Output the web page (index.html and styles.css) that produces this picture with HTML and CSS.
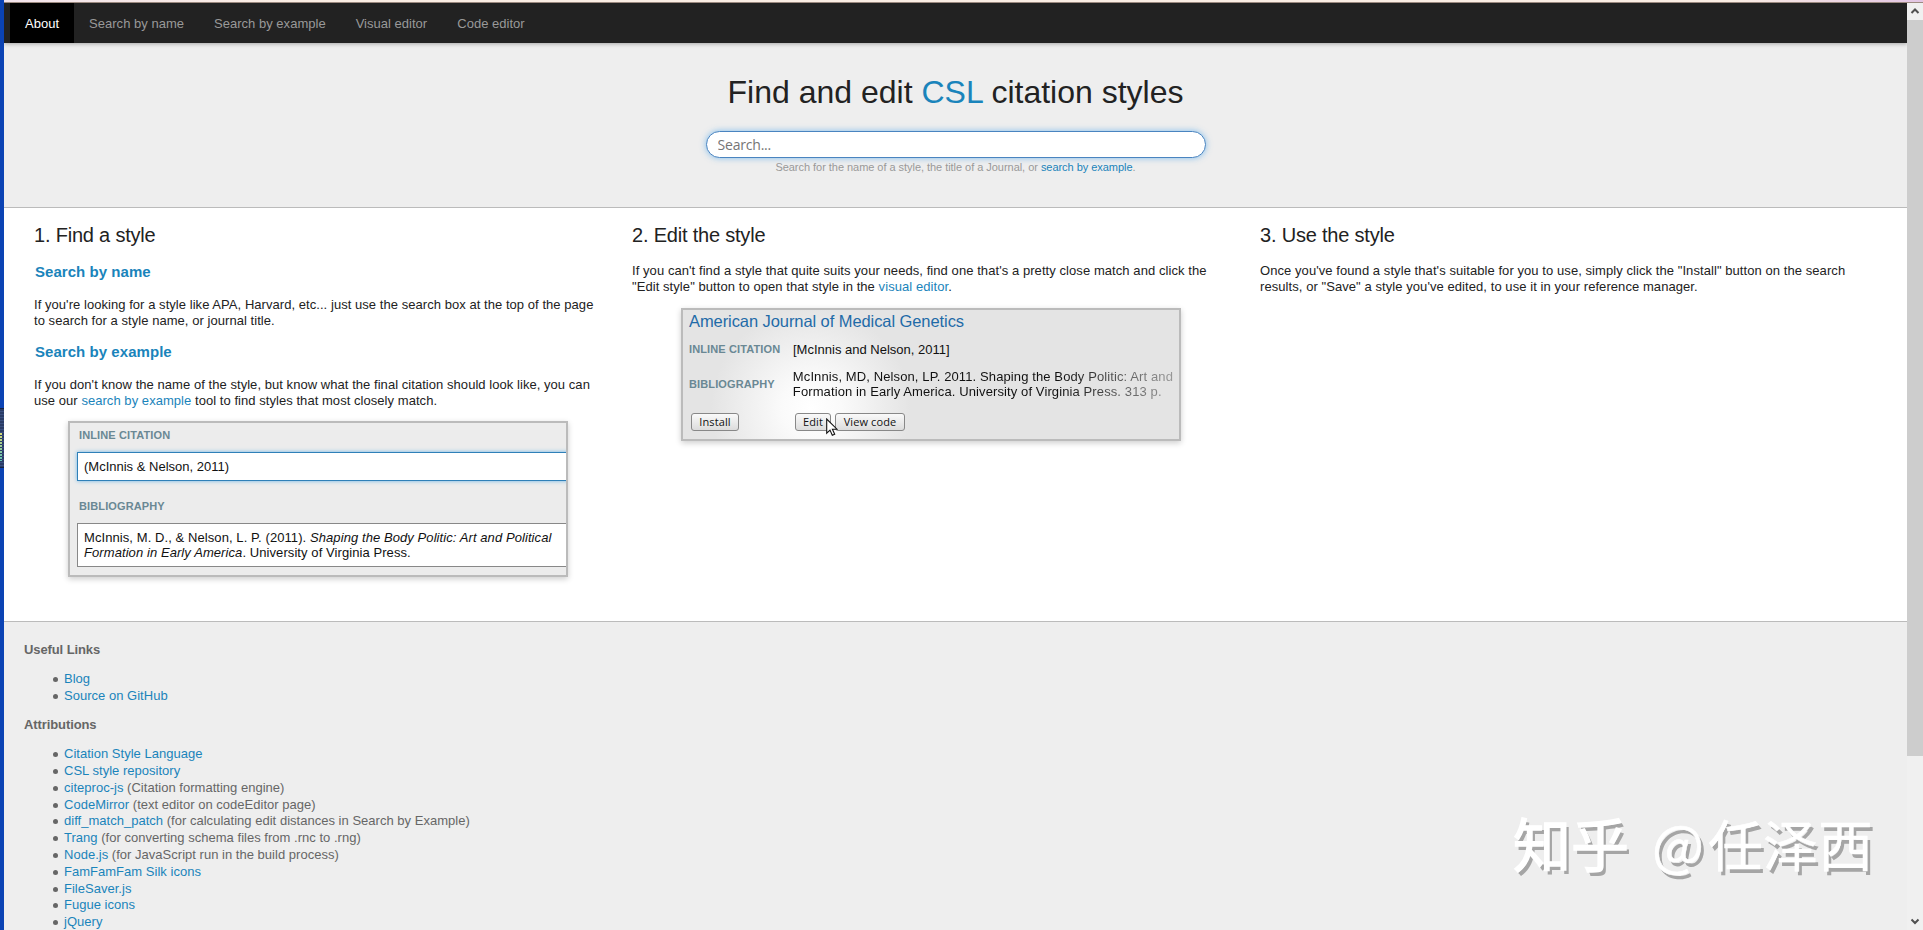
FILE: index.html
```html
<!DOCTYPE html>
<html lang="en">
<head>
    <meta charset="UTF-8">
    <title>Find and edit CSL citation styles</title>
    <link rel="stylesheet" href="styles.css">
</head>
<body>
    <div class="desktop-edge"><div class="edge-widget"></div></div>
    <div class="window">
        <div class="window-top"></div>
        <div class="window-body">
            <div class="page">
                <ul class="navbar">
                    <li class="active"><a href="#">About</a></li>
                    <li><a href="#">Search by name</a></li>
                    <li><a href="#">Search by example</a></li>
                    <li><a href="#">Visual editor</a></li>
                    <li><a href="#">Code editor</a></li>
                </ul>

                <div class="header">
                    <h1>Find and edit <a href="#">CSL</a> citation styles</h1>
                    <input type="text" class="search" placeholder="Search...">
                    <div class="hint">Search for the name of a style, the title of a Journal, or <a href="#">search by example</a>.</div>
                </div>

                <div class="columns">
                    <div class="column find">
                        <h2>1. Find a style</h2>
                        <h3><a href="#">Search by name</a></h3>
                        <p>If you're looking for a style like APA, Harvard, etc... just use the search box at the top of the page<br>to search for a style name, or journal title.</p>
                        <h3><a href="#">Search by example</a></h3>
                        <p>If you don't know the name of the style, but know what the final citation should look like, you can<br>use our <a href="#">search by example</a> tool to find styles that most closely match.</p>
                        <div class="shot example-shot">
                            <div class="label">INLINE CITATION</div>
                            <div class="field focused">(McInnis &amp; Nelson, 2011)</div>
                            <div class="label">BIBLIOGRAPHY</div>
                            <div class="field reference">McInnis, M. D., &amp; Nelson, L. P. (2011). <i>Shaping the Body Politic: Art and Political<br>Formation in Early America</i>. University of Virginia Press.</div>
                        </div>
                    </div>
                    <div class="column edit">
                        <h2>2. Edit the style</h2>
                        <p>If you can't find a style that quite suits your needs, find one that's a pretty close match and click the<br>"Edit style" button to open that style in the <a href="#">visual editor</a>.</p>
                        <div class="shot result-shot">
                            <div class="result-title">American Journal of Medical Genetics</div>
                            <div class="row inline-row">
                                <div class="label">INLINE CITATION</div>
                                <div class="citation">[McInnis and Nelson, 2011]</div>
                            </div>
                            <div class="row biblio-row">
                                <div class="label">BIBLIOGRAPHY</div>
                                <div class="citation fade">McInnis, MD, Nelson, LP. 2011. Shaping the Body Politic: Art and<br>Formation in Early America. University of Virginia Press. 313 p.</div>
                            </div>
                            <div class="buttons">
                                <span class="btn install">Install</span>
                                <span class="btn edit-btn">Edit</span>
                                <span class="btn code-btn">View code</span>
                            </div>
                            <svg class="cursor" width="12" height="19" viewBox="0 0 12 19"><path d="M.7 1v14.2l3.3-3.1 2.3 5.2 2.4-1-2.3-5.1h4.6z" fill="#fff" stroke="#111" stroke-width="1.1"/></svg>
                        </div>
                    </div>
                    <div class="column use">
                        <h2>3. Use the style</h2>
                        <p>Once you've found a style that's suitable for you to use, simply click the "Install" button on the search<br>results, or "Save" a style you've edited, to use it in your reference manager.</p>
                    </div>
                </div>

                <div class="footer">
                    <h4>Useful Links</h4>
                    <ul>
                        <li><a href="#">Blog</a></li>
                        <li><a href="#">Source on GitHub</a></li>
                    </ul>
                    <h4>Attributions</h4>
                    <ul>
                        <li><a href="#">Citation Style Language</a></li>
                        <li><a href="#">CSL style repository</a></li>
                        <li><a href="#">citeproc-js</a> (Citation formatting engine)</li>
                        <li><a href="#">CodeMirror</a> (text editor on codeEditor page)</li>
                        <li><a href="#">diff_match_patch</a> (for calculating edit distances in Search by Example)</li>
                        <li><a href="#">Trang</a> (for converting schema files from .rnc to .rng)</li>
                        <li><a href="#">Node.js</a> (for JavaScript run in the build process)</li>
                        <li><a href="#">FamFamFam Silk icons</a></li>
                        <li><a href="#">FileSaver.js</a></li>
                        <li><a href="#">Fugue icons</a></li>
                        <li><a href="#">jQuery</a></li>
                    </ul>
                </div>
            </div>
            <div class="scrollbar">
                <svg class="arrow" width="16" height="17" viewBox="0 0 16 17"><path d="M4.5 10l3.5-3.5 3.5 3.5" fill="none" stroke="#505050" stroke-width="2"/></svg>
                <div class="thumb"></div>
                <svg class="arrow down" width="16" height="17" viewBox="0 0 16 17"><path d="M4.5 6.5l3.5 3.5 3.5-3.5" fill="none" stroke="#505050" stroke-width="2"/></svg>
            </div>
        </div>
    </div>
    <div class="watermark"><span class="brand">知乎</span><span class="at">@</span><span class="author">任泽西</span></div>
</body>
</html>
```

FILE: styles.css
```css
* {
    box-sizing: border-box;
}

body {
    margin: 0;
    display: flex;
    height: 930px;
    overflow: hidden;
    font-family: "Liberation Sans", Arial, sans-serif;
    font-size: 13px;
    line-height: 16px;
    color: #222;
    background-color: #fff;
}

a {
    color: #1a84bb;
    text-decoration: none;
}

h1, h2, h3, h4, p, ul {
    margin: 0;
    padding: 0;
}

.desktop-edge {
    flex: none;
    width: 4px;
    padding-top: 408px;
    background-color: #0b43b4;
}

.edge-widget {
    height: 60px;
    padding-top: 24px;
    border-top: 1px solid #14213f;
    border-bottom: 1px solid #14213f;
    background: repeating-linear-gradient(#2a3c66 0 2px, #3a4f80 2px 3px);
}

.edge-widget::before {
    content: "";
    display: block;
    width: 2px;
    height: 28px;
    background: repeating-linear-gradient(transparent 0 2px, #2a3c66 2px 3px), linear-gradient(#d6dc7a, #5fc0b8);
}

.window {
    flex: 1;
    display: flex;
    flex-direction: column;
}

.window-top {
    flex: none;
    height: 3px;
    background: linear-gradient(to right, #f3e4ec, #fbeee4 15%, #fbeee4 90%, #e3c6e4);
    border-bottom: 1px solid #9c8a80;
}

.window-body {
    flex: 1;
    display: flex;
    min-height: 0;
}

.page {
    flex: 1;
    display: flex;
    flex-direction: column;
    overflow: hidden;
}

/* navigation */
.navbar {
    flex: none;
    display: flex;
    height: 40px;
    padding-left: 6px;
    list-style: none;
    background-color: #222;
    box-shadow: 0 1px 4px rgba(0, 0, 0, 0.3);
    position: relative;
}

.navbar li {
    padding: 13px 15px 0;
    letter-spacing: 0.02px;
}

.navbar a {
    color: #999;
}

.navbar .active {
    background-color: #000;
}

.navbar .active a {
    color: #fff;
}

/* search header */
.header {
    flex: none;
    height: 165px;
    display: flex;
    flex-direction: column;
    align-items: center;
    padding-top: 31px;
    background-color: #eee;
    border-bottom: 1px solid #bbb;
}

h1 {
    font-size: 32px;
    font-weight: normal;
    line-height: 36px;
}

.search {
    width: 500px;
    height: 27px;
    margin-top: 21px;
    padding: 0 11px;
    border: 1px solid #4a84c0;
    border-radius: 14px;
    outline: none;
    box-shadow: 0 0 6px rgba(82, 168, 236, 0.7);
    font-family: "Open Sans", sans-serif;
    font-size: 14px;
    letter-spacing: -0.2px;
}

.hint {
    margin-top: 1px;
    font-size: 11px;
    letter-spacing: -0.04px;
    color: #999;
}

/* three steps */
.columns {
    flex: none;
    display: flex;
    height: 413px;
    background-color: #fff;
}

.column {
    padding-top: 15px;
}

.find {
    width: 598px;
    padding-left: 30px;
}

.edit {
    width: 628px;
    padding-left: 30px;
}

.use {
    padding-left: 30px;
}

h2 {
    font-size: 20px;
    font-weight: normal;
    line-height: 24px;
    letter-spacing: -0.2px;
}

h3 {
    margin: 16px 0 0 1px;
    font-size: 15px;
    line-height: 18px;
    letter-spacing: 0.05px;
}

p + h3 {
    margin-top: 14px;
}

p {
    margin-top: 16px;
    letter-spacing: 0.07px;
    white-space: nowrap;
}

.find p {
    letter-spacing: 0.05px;
}

.shot {
    position: relative;
    width: 500px;
    border: 2px solid #bbb;
    box-shadow: 0 2px 6px rgba(0, 0, 0, 0.2);
    background-color: #ececec;
    overflow: hidden;
    color: #111;
    line-height: 15px;
    white-space: nowrap;
}

.label {
    font-size: 11px;
    font-weight: bold;
    letter-spacing: 0.12px;
    color: #6a8894;
}

.example-shot {
    height: 156px;
    margin: 12px 0 0 34px;
    padding: 5px 0 0 7px;
}

.example-shot .label {
    margin-left: 2px;
}

.field {
    margin: 9px -4px 18px 0;
    padding: 6px;
    border: 1px solid #888;
    background-color: #fff;
}

.field.focused {
    border-color: #2f80b8;
    box-shadow: 0 0 4px #6ab4e6;
}

.reference {
    letter-spacing: 0.08px;
}

.result-shot {
    height: 133px;
    margin: 13px 0 0 49px;
    padding: 1px 6px;
    background: radial-gradient(circle at 128px 98px, #fff 0, #fafafa 30px, #e4e4e4 100px);
}

.result-title {
    font-size: 16.5px;
    line-height: 20px;
    letter-spacing: -0.08px;
    color: #1f6ba8;
}

.row {
    display: flex;
    align-items: center;
}

.row .label {
    width: 104px;
}

.inline-row {
    margin-top: 11px;
}

.biblio-row {
    margin-top: 12px;
}

.fade {
    letter-spacing: 0.11px;
    color: transparent;
    background: linear-gradient(to right, #111 70%, #999 100%);
    background-clip: text;
}

.buttons {
    display: flex;
    margin: 14px 0 0 2px;
}

.btn {
    height: 18px;
    border: 1px solid #888;
    border-radius: 3px;
    background: linear-gradient(#fafafa, #dcdcdc);
    font-family: "Open Sans", sans-serif;
    font-size: 11px;
    line-height: 16px;
    letter-spacing: 0.1px;
    text-align: center;
}

.install {
    width: 48px;
    margin-right: 56px;
}

.edit-btn {
    width: 36px;
    margin-right: 4px;
}

.code-btn {
    width: 70px;
}

.cursor {
    position: absolute;
    left: 143px;
    top: 108px;
}

/* footer */
.footer {
    flex: none;
    padding: 20px 20px 0;
    border-top: 1px solid #bbb;
    background-color: #eee;
    color: #666;
    line-height: 16.8px;
}

.footer h4 {
    letter-spacing: -0.1px;
}

.footer ul {
    margin: 12px 0 13px;
    padding-left: 40px;
    list-style: none;
    letter-spacing: 0.02px;
}

.footer li::before {
    content: "";
    display: inline-block;
    width: 5px;
    height: 5px;
    margin: 0 6px 0 -11px;
    border-radius: 50%;
    background-color: #666;
    vertical-align: 1px;
}

/* scrollbar */
.scrollbar {
    flex: none;
    width: 16px;
    display: flex;
    flex-direction: column;
    background-color: #f0f0f0;
}

.arrow {
    flex: none;
    display: block;
}

.down {
    margin-top: auto;
}

.thumb {
    height: 736px;
    background-color: #cdcdcd;
}

.watermark {
    position: absolute;
    left: 1513px;
    top: 804px;
    display: flex;
    font-family: "Noto Sans CJK SC", sans-serif;
    font-size: 55px;
    line-height: 76px;
    color: #fff;
    text-shadow: 3px 4px 0 #a5a5a5;
    -webkit-text-stroke: 0.5px #fff;
}

.brand {
    margin-right: 23px;
    font-size: 58px;
    -webkit-text-stroke: 1.5px #fff;
}

.at {
    margin-right: 4px;
}
```
